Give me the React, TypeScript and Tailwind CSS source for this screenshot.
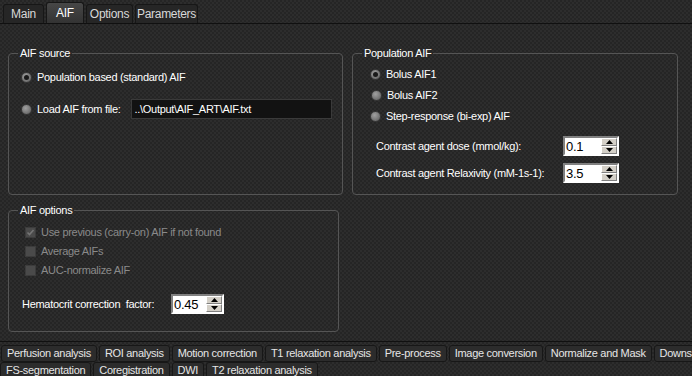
import type { ReactNode } from 'react';

const TOP_TABS = [
  { label: 'Main', width: 'w-[41px]' },
  { label: 'AIF', width: 'w-[38px]' },
  { label: 'Options', width: 'w-[47px]' },
  { label: 'Parameters', width: 'w-[63px]' },
];
const BOTTOM_ROW_1 = [
  'Perfusion analysis',
  'ROI analysis',
  'Motion correction',
  'T1 relaxation analysis',
  'Pre-process',
  'Image conversion',
  'Normalize and Mask',
  'Downsample',
];
const BOTTOM_ROW_2 = ['FS-segmentation', 'Coregistration', 'DWI', 'T2 relaxation analysis'];

function Radio({ checked = false }: { checked?: boolean }) {
  return (
    <span className="flex h-[11px] w-[11px] shrink-0 items-center justify-center rounded-full border border-[#3a3a3a] bg-[radial-gradient(circle_at_40%_35%,#a0a0a0,#5a5a5a)]">
      {checked && <span className="h-[5px] w-[5px] rounded-full bg-[#1a1a1a]" />}
    </span>
  );
}

function Checkbox({ checked = false }: { checked?: boolean }) {
  return (
    <span className="flex h-[11px] w-[11px] shrink-0 items-center justify-center border border-[#3c3c3c] bg-[#4a4a4a]">
      {checked && (
        <svg width="9" height="9" viewBox="0 0 9 9">
          <path d="M1.5 4.5 L3.5 6.5 L7.5 2" stroke="#757575" strokeWidth="1.6" fill="none" />
        </svg>
      )}
    </span>
  );
}

function SpinBox({ value, width }: { value: string; width: string }) {
  return (
    <div
      className={`flex h-[20px] ${width} border-2 border-t-[#808080] border-l-[#808080] border-b-[#ffffff] border-r-[#ffffff] bg-white`}
    >
      <div className="flex flex-1 items-center pl-[1px] text-[13px] leading-none text-black">{value}</div>
      <div className="flex w-[16px] flex-col">
        <div className="flex flex-1 items-center justify-center border border-t-white border-l-white border-b-[#808080] border-r-[#808080] bg-[#d4d0c8]">
          <svg width="7" height="4" viewBox="0 0 7 4">
            <path d="M3.5 0 L7 4 L0 4 Z" fill="#000" />
          </svg>
        </div>
        <div className="flex flex-1 items-center justify-center border border-t-white border-l-white border-b-[#808080] border-r-[#808080] bg-[#d4d0c8]">
          <svg width="7" height="4" viewBox="0 0 7 4">
            <path d="M0 0 L7 0 L3.5 4 Z" fill="#000" />
          </svg>
        </div>
      </div>
    </div>
  );
}

function GroupBox({ title, className, children }: { title: string; className: string; children: ReactNode }) {
  return (
    <fieldset className={`rounded-[4px] border border-[#555555] ${className}`}>
      <legend className="ml-[9px] px-[2px] leading-[14px] text-white">{title}</legend>
      {children}
    </fieldset>
  );
}

function BottomTab({ label }: { label: string }) {
  return (
    <div className="flex h-[17px] shrink-0 items-center whitespace-nowrap rounded-[3px] border border-[#171717] bg-[#2c2c2c] px-[5px] text-[#e6e6e6]">
      {label}
    </div>
  );
}

export default function App() {
  return (
    <div className="flex h-[376px] w-[692px] flex-col overflow-hidden bg-[#292929] bg-[repeating-conic-gradient(#2d2d2d_0%_25%,#252525_0%_50%)] bg-[length:4px_4px] font-['Liberation_Sans',Arial,sans-serif] text-[11px] tracking-[-0.3px] text-white">
      <div className="flex h-[24px] shrink-0 items-end gap-[2px] border-b border-[#101010] pl-[3px]">
        {TOP_TABS.map((t) => {
          const active = t.label === 'AIF';
          return (
            <div
              key={t.label}
              className={`flex ${t.width} items-center justify-center rounded-t-[3px] border border-b-0 border-[#171717] text-[12px] ${
                active ? 'h-[21px] bg-[linear-gradient(#474747,#333333)] text-white' : 'h-[19px] bg-[#262626] text-[#d8d8d8]'
              }`}
            >
              {t.label}
            </div>
          );
        })}
      </div>

      <div className="flex h-[318px] shrink-0 gap-[9px] border-b border-[#101010] px-[8px] pt-[22px]">
        <div className="flex w-[335px] flex-col gap-[8px]">
          <GroupBox title="AIF source" className="h-[149px]">
            <div className="flex flex-col gap-[12px] pl-[12px] pt-[7px]">
              <div className="flex h-[20px] items-center gap-[5px]">
                <Radio checked />
                <span>Population based (standard) AIF</span>
              </div>
              <div className="flex h-[20px] items-center gap-[5px]">
                <Radio />
                <span>Load AIF from file:</span>
                <div className="ml-[5px] flex h-[20px] w-[201px] items-center border border-[#3a3a3a] bg-[#121212] px-[3px] text-white">
                  ..\Output\AIF_ART\AIF.txt
                </div>
              </div>
            </div>
          </GroupBox>

          <GroupBox title="AIF options" className="mr-[4px] h-[129px]">
            <div className="flex flex-col pl-[16px] pt-[6px] text-[#8a8a8a]">
              <div className="flex h-[19px] items-center gap-[5px]">
                <Checkbox checked />
                <span className="w-[184px] overflow-hidden whitespace-nowrap">Use previous (carry-on) AIF if not found</span>
              </div>
              <div className="flex h-[19px] items-center gap-[5px]">
                <Checkbox />
                <span>Average AIFs</span>
              </div>
              <div className="flex h-[19px] items-center gap-[5px]">
                <Checkbox />
                <span>AUC-normalize AIF</span>
              </div>
            </div>
            <div className="mt-[14px] flex h-[20px] items-center pl-[13px]">
              <span className="w-[149px]">Hematocrit correction&nbsp; factor:</span>
              <SpinBox value="0.45" width="w-[53px]" />
            </div>
          </GroupBox>
        </div>

        <GroupBox title="Population AIF" className="h-[149px] w-[326px]">
          <div className="flex flex-col gap-[5px] pl-[17px] pt-[6px]">
            <div className="flex h-[16px] items-center gap-[5px]">
              <Radio checked />
              <span>Bolus AIF1</span>
            </div>
            <div className="flex h-[16px] items-center gap-[5px] pl-[1px]">
              <Radio />
              <span>Bolus AIF2</span>
            </div>
            <div className="flex h-[16px] items-center gap-[5px]">
              <Radio />
              <span>Step-response (bi-exp) AIF</span>
            </div>
          </div>
          <div className="flex flex-col gap-[7px] pl-[23px] pt-[12px]">
            <div className="flex h-[20px] items-center">
              <span className="w-[187px]">Contrast agent dose (mmol/kg):</span>
              <SpinBox value="0.1" width="w-[56px]" />
            </div>
            <div className="flex h-[20px] items-center">
              <span className="w-[187px]">Contrast agent Relaxivity (mM-1s-1):</span>
              <SpinBox value="3.5" width="w-[56px]" />
            </div>
          </div>
        </GroupBox>
      </div>

      <div className="flex flex-col pt-[3px]">
        <div className="flex gap-[2px] pl-[1px]">
          {BOTTOM_ROW_1.map((t) => (
            <BottomTab key={t} label={t} />
          ))}
        </div>
        <div className="flex gap-[2px]">
          {BOTTOM_ROW_2.map((t) => (
            <BottomTab key={t} label={t} />
          ))}
        </div>
      </div>
    </div>
  );
}
